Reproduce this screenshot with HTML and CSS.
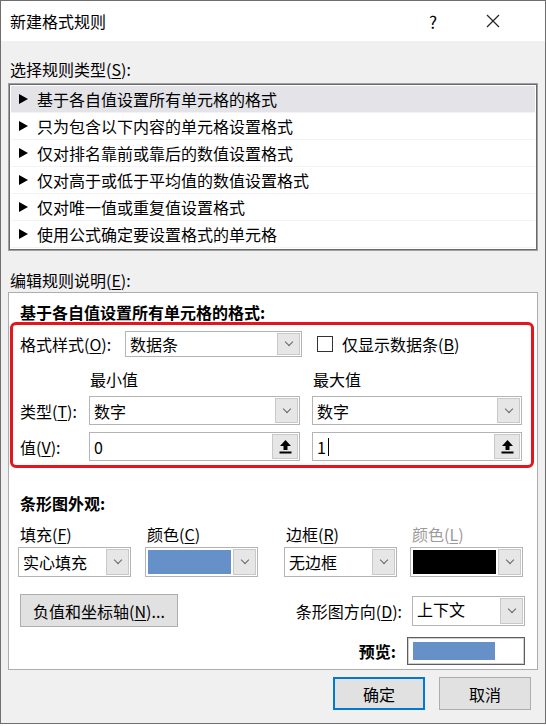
FILE: index.html
```html
<!DOCTYPE html>
<html lang="zh-CN">
<head>
<meta charset="utf-8"/>
<title>新建格式规则</title>
<link rel="stylesheet" href="styles.css">
</head>
<body>
<div class="window">
  <div class="titlebar">
    <span class="title">新建格式规则</span>
    <span class="tb-help">?</span>
    <span class="tb-close">
      <svg width="14" height="14" viewBox="0 0 14 14"><path d="M1 1 L13 13 M13 1 L1 13" stroke="#222" stroke-width="1.2" fill="none"/></svg>
    </span>
  </div>
  <div class="content">
    <div class="label top-label">选择规则类型(<u>S</u>):</div>
    <ul class="rule-list">
      <li class="selected"><span class="tri"></span>基于各自值设置所有单元格的格式</li>
      <li><span class="tri"></span>只为包含以下内容的单元格设置格式</li>
      <li><span class="tri"></span>仅对排名靠前或靠后的数值设置格式</li>
      <li><span class="tri"></span>仅对高于或低于平均值的数值设置格式</li>
      <li><span class="tri"></span>仅对唯一值或重复值设置格式</li>
      <li><span class="tri"></span>使用公式确定要设置格式的单元格</li>
    </ul>
    <div class="label edit-label">编辑规则说明(<u>E</u>):</div>
    <div class="desc">
      <div class="heading">基于各自值设置所有单元格的格式:</div>
      <div class="redbox">
        <div class="style-row">
          <span class="style-label">格式样式(<u>O</u>):</span>
          <div class="combo style-combo"><span class="val">数据条</span><span class="arrow"><i></i></span></div>
          <div class="check"><span class="box"></span>仅显示数据条(<u>B</u>)</div>
        </div>
        <div class="minmax">
          <span></span>
          <span class="col-head">最小值</span>
          <span class="col-head">最大值</span>
          <span class="row-label">类型(<u>T</u>):</span>
          <div class="combo tall"><span class="val">数字</span><span class="arrow"><i></i></span></div>
          <div class="combo tall"><span class="val">数字</span><span class="arrow"><i></i></span></div>
          <span class="row-label">值(<u>V</u>):</span>
          <div class="combo tall field"><span class="val">0</span><span class="pick"><svg width="13" height="14" viewBox="0 0 13 14"><path d="M6.5 0 L12 6 L8.5 6 L8.5 10 L4.5 10 L4.5 6 L1 6 Z" fill="#000"/><rect x="0.5" y="11.5" width="12" height="2" fill="#000"/></svg></span></div>
          <div class="combo tall field"><span class="val">1<span class="caret"></span></span><span class="pick"><svg width="13" height="14" viewBox="0 0 13 14"><path d="M6.5 0 L12 6 L8.5 6 L8.5 10 L4.5 10 L4.5 6 L1 6 Z" fill="#000"/><rect x="0.5" y="11.5" width="12" height="2" fill="#000"/></svg></span></div>
        </div>
      </div>
      <div class="heading bar-heading">条形图外观:</div>
      <div class="bar-grid">
        <span class="bar-label">填充(<u>F</u>)</span>
        <span class="bar-label">颜色(<u>C</u>)</span>
        <span class="bar-label">边框(<u>R</u>)</span>
        <span class="bar-label disabled">颜色(<u>L</u>)</span>
        <div class="combo wide"><span class="val">实心填充</span><span class="arrow"><i></i></span></div>
        <div class="combo wide"><span class="swatch blue"></span><span class="arrow"><i></i></span></div>
        <div class="combo wide"><span class="val">无边框</span><span class="arrow"><i></i></span></div>
        <div class="combo wide"><span class="swatch black"></span><span class="arrow"><i></i></span></div>
      </div>
      <div class="axis-row">
        <button class="btn axis-btn">负值和坐标轴(<u>N</u>)...</button>
        <span class="dir-label">条形图方向(<u>D</u>):</span>
        <div class="combo wide dir-combo"><span class="val dir-val">上下文</span><span class="arrow"><i></i></span></div>
      </div>
      <div class="preview-row">
        <span class="preview-label">预览:</span>
        <div class="preview"><span class="preview-bar"></span></div>
      </div>
    </div>
    <div class="buttons">
      <button class="btn ok">确定</button>
      <button class="btn">取消</button>
    </div>
  </div>
</div>
</body>
</html>
```

FILE: styles.css
```css
body {
    margin: 0;
    background: #ffffff;
    font-family: "Noto Sans CJK SC", "Noto Sans", sans-serif;
    font-size: 16px;
    color: #000;
}
u {
    text-decoration: underline;
    text-underline-offset: 2px;
}
.window {
    width: 544px;
    height: 722px;
    border: 1px solid #6e6e6e;
    background: #f0f0f0;
    display: flex;
    flex-direction: column;
}
.titlebar {
    height: 40px;
    background: #ffffff;
    display: flex;
    align-items: center;
    flex-shrink: 0;
}
.title {
    padding-left: 9px;
    line-height: 20px;
    flex: 1;
}
.tb-help {
    width: 46px;
    text-align: center;
    font-size: 17px;
    margin-right: 14px;
}
.tb-close {
    width: 46px;
    display: flex;
    justify-content: center;
    margin-right: 29px;
}
.content {
    padding: 18px 7px 0 7px;
}
.label {
    line-height: 20px;
    padding-left: 2px;
}
.rule-list {
    list-style: none;
    margin: 4px 0 0 0;
    padding: 2px 2px;
    background: #ffffff;
    border: 1px solid #a0a0a0;
    box-shadow: inset 0 0 0 1px #6a6a6a;
}
.rule-list li {
    height: 27px;
    line-height: 27px;
    display: flex;
    align-items: center;
    padding-left: 8px;
    border-bottom: 1px solid #f3f3f3;
    box-sizing: border-box;
}
.rule-list li.selected {
    background: #e3e3e8;
}
.tri {
    width: 0;
    height: 0;
    border-left: 9px solid #000;
    border-top: 5px solid transparent;
    border-bottom: 5px solid transparent;
    margin-right: 9px;
}
.edit-label {
    margin-top: 19px;
}
.desc {
    margin-top: 2px;
    background: #ffffff;
    border: 1px solid #adadad;
    padding: 9px 0 7px 0;
    height: 378px;
    box-sizing: border-box;
}
.heading {
    font-weight: bold;
    line-height: 20px;
    padding-left: 11px;
}
.redbox {
    margin: 0 3px 0 1px;
    border: 3px solid #e8141c;
    border-radius: 6px;
    padding: 6px 7px 4px 7px;
}
.style-row {
    display: flex;
    align-items: center;
}
.style-label {
    width: 105px;
    line-height: 20px;
}
.combo {
    box-sizing: border-box;
    height: 26px;
    border: 1px solid #b4b4b4;
    background: #ffffff;
    display: flex;
    align-items: stretch;
    padding: 1px;
}
.combo .val {
    flex: 1;
    padding-left: 3px;
    display: flex;
    align-items: center;
    line-height: 20px;
}
.combo .arrow {
    width: 21px;
    background: #e6e6e6;
    border: 1px solid #c9c9c9;
    display: flex;
    align-items: center;
    justify-content: center;
}
.combo .arrow i {
    width: 5px;
    height: 5px;
    border-right: 1px solid #666;
    border-bottom: 1px solid #666;
    transform: rotate(45deg);
    margin-top: -4px;
}
.style-combo {
    width: 177px;
}
.check {
    display: flex;
    align-items: center;
    margin-left: 15px;
    line-height: 20px;
}
.check .box {
    width: 14px;
    height: 14px;
    border: 1px solid #333;
    margin-right: 9px;
}
.minmax {
    display: grid;
    grid-template-columns: 69px 223px 210px;
    grid-template-rows: 20px 29px 29px;
    row-gap: 7px;
    margin-top: 12px;
    align-items: center;
}
.minmax .combo {
    width: 211px;
}
.minmax .combo:nth-child(3n) {
    width: 210px;
}
.col-head {
    line-height: 20px;
    padding-left: 1px;
}
.row-label {
    line-height: 20px;
}
.combo.tall {
    height: 29px;
}
.field .pick {
    width: 24px;
    background: #e6e6e6;
    border: 1px solid #c9c9c9;
    display: flex;
    align-items: center;
    justify-content: center;
}
.caret {
    display: inline-block;
    width: 1px;
    height: 18px;
    background: #000;
    margin-left: 2px;
}
.bar-heading {
    margin-top: 25px;
    padding-left: 11px;
}
.bar-grid {
    display: grid;
    grid-template-columns: 127px 139px 126px 113px;
    grid-template-rows: 20px 30px;
    row-gap: 3px;
    margin-top: 11px;
    padding-left: 9px;
}
.bar-label {
    line-height: 20px;
    padding-left: 2px;
}
.bar-label.disabled {
    color: #9b9b9b;
}
.combo.wide {
    width: 113px;
    height: 30px;
}
.swatch {
    flex: 1;
    margin: 1px 2px 1px 1px;
}
.swatch.blue {
    background: #6590c8;
}
.swatch.black {
    background: #000000;
}
.axis-row {
    display: flex;
    align-items: center;
    margin-top: 17px;
    padding-left: 11px;
}
.btn {
    font-family: inherit;
    font-size: 16px;
    background: #e1e1e1;
    border: 1px solid #adadad;
    color: #000;
    padding: 0;
    line-height: 20px;
}
.axis-btn {
    width: 158px;
    height: 33px;
}
.dir-label {
    margin-left: auto;
    margin-right: 10px;
    line-height: 20px;
}
.dir-combo {
    margin-right: 12px;
}
.dir-val {
    margin-top: -4px;
}
.preview-row {
    display: flex;
    align-items: center;
    justify-content: flex-end;
    margin-top: 10px;
    padding-right: 12px;
}
.preview-label {
    font-weight: bold;
    line-height: 20px;
    margin-right: 11px;
}
.preview {
    box-sizing: border-box;
    width: 118px;
    height: 28px;
    border: 1px solid #5e5e5e;
    box-shadow: inset 0 0 0 1px #cfcfcf;
    padding: 4px 5px;
    display: flex;
}
.preview-bar {
    width: 82px;
    background: #6590c8;
}
.buttons {
    display: flex;
    justify-content: flex-end;
    gap: 14px;
    margin-top: 7px;
    padding-right: 7px;
}
.buttons .btn {
    width: 92px;
    height: 33px;
}
.buttons .ok {
    border: 2px solid #0078d7;
}
```
